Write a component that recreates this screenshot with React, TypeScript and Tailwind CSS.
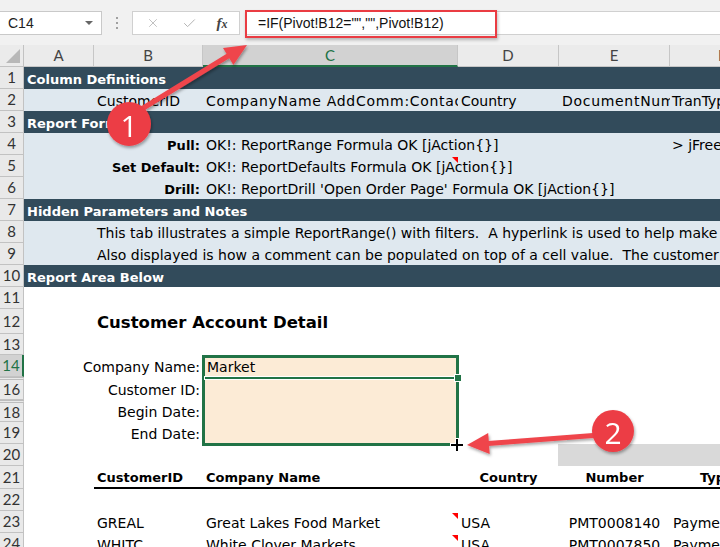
import React from "react";
import { X, Check } from "lucide-react";

type RowProps = {
  n: string;
  h?: string;
  bg?: string;
  active?: boolean;
  dbl?: boolean;
  children?: React.ReactNode;
};

function Row({ n, h = "h-[22px]", bg = "bg-white", active = false, dbl = false, children }: RowProps) {
  const hdr = active
    ? "bg-[#d2d2d2] text-[#217346] border-r-2 border-r-[#217346]"
    : "bg-[#e9e9e9] text-[#333] border-r border-r-[#c2c2c2]";
  return (
    <div className={`flex ${h}`}>
      <div
        className={`w-[24px] shrink-0 flex items-center justify-center border-b border-b-[#c2c2c2] font-['Lato',sans-serif] text-[15px] ${hdr} ${
          dbl ? "border-t-[3px] border-t-[#bdbdbd] border-double" : ""
        }`}
      >
        {n}
      </div>
      <div className={`flex-1 flex relative ${bg}`}>{children}</div>
    </div>
  );
}

const cA = "w-[70px] shrink-0 flex items-center whitespace-nowrap pt-[3px]";
const cB = "w-[109px] shrink-0 flex items-center whitespace-nowrap pt-[3px]";
const cC = "w-[255px] shrink-0 flex items-center whitespace-nowrap relative pt-[3px]";
const cD = "w-[101px] shrink-0 flex items-center whitespace-nowrap relative pt-[3px]";
const cE = "w-[111px] shrink-0 flex items-center whitespace-nowrap pt-[3px]";
const cF = "flex-1 flex items-center whitespace-nowrap pt-[3px]";

const darkTxt = "text-white font-bold text-[13px] pl-[3px]";

function Tri() {
  return (
    <div className="absolute right-0 top-[2px] w-0 h-0 border-l-[6px] border-l-transparent border-t-[6px] border-t-[#ff0000]" />
  );
}

export default function App() {
  return (
    <div className="relative w-[720px] h-[547px] overflow-hidden bg-white font-['DejaVu_Sans',sans-serif] text-[14px] text-black">
      {/* Formula bar */}
      <div className="h-[45px] bg-[#f1f1f1] flex items-start pt-[11px]">
        <div className="w-[102px] h-[24px] bg-white border border-[#c9c9c9] border-l-0 flex items-center pl-[8px] font-['Liberation_Sans',sans-serif] text-[14px] text-[#222]">
          C14
          <div className="ml-auto mr-[8px] w-0 h-0 border-l-[4px] border-l-transparent border-r-[4px] border-r-transparent border-t-[4px] border-t-[#666]" />
        </div>
        <div className="w-[30px] h-[24px] flex flex-col items-center justify-center gap-[3px]">
          <div className="w-[2px] h-[2px] bg-[#a0a0a0]" />
          <div className="w-[2px] h-[2px] bg-[#a0a0a0]" />
          <div className="w-[2px] h-[2px] bg-[#a0a0a0]" />
        </div>
        <div className="w-[108px] h-[24px] bg-white border border-[#d0d0d0] flex items-center">
          <div className="w-[40px] flex justify-center">
            <X size={14} strokeWidth={1.4} color="#b3b3b3" />
          </div>
          <div className="w-[32px] flex justify-center">
            <Check size={15} strokeWidth={1.6} color="#b3b3b3" />
          </div>
          <div className="w-[34px] flex justify-center">
            <span className="font-['Liberation_Serif',serif] italic font-bold text-[15px] text-[#444] leading-none">
              f<span className="text-[12px]">x</span>
            </span>
          </div>
        </div>
        <div className="ml-[5px] flex-1 h-[24px] bg-white border-y border-l border-[#d0d0d0] flex items-center pl-[12px] font-['Liberation_Sans',sans-serif] text-[14px] text-[#111]">
          =IF(Pivot!B12="","",Pivot!B12)
        </div>
      </div>

      {/* Column headers */}
      <div className="flex h-[22px] bg-[#ebebeb] font-['Lato',sans-serif] text-[15px] text-[#444]">
        <div className="w-[24px] shrink-0 border-r border-b border-[#c2c2c2] flex items-end justify-end pr-[3px] pb-[3px]">
          <div className="w-0 h-0 border-l-[14px] border-l-transparent border-b-[14px] border-b-[#b8b8b8]" />
        </div>
        <div className="w-[70px] shrink-0 border-r border-b border-[#c6c6c6] flex items-center justify-center">A</div>
        <div className="w-[109px] shrink-0 border-r border-b border-[#c6c6c6] flex items-center justify-center">B</div>
        <div className="w-[255px] shrink-0 bg-[#d2d2d2] border-r border-r-[#c6c6c6] border-b-2 border-b-[#217346] flex items-center justify-center text-[#217346]">C</div>
        <div className="w-[101px] shrink-0 border-r border-b border-[#c6c6c6] flex items-center justify-center">D</div>
        <div className="w-[111px] shrink-0 border-r border-b border-[#c6c6c6] flex items-center justify-center">E</div>
        <div className="flex-1 border-b border-[#c6c6c6] flex items-center pl-[48px]">F</div>
      </div>

      {/* Sheet rows */}
      <Row n="1" bg="bg-[#324b5b]">
        <div className={`${cA} ${darkTxt}`}>Column Definitions</div>
      </Row>
      <Row n="2" bg="bg-[#dfe8ef]">
        <div className={cA} />
        <div className={`${cB} pl-[3px]`}>CustomerID</div>
        <div className={`${cC} pl-[3px] overflow-hidden tracking-[0.7px]`}>CompanyName AddComm:Contact</div>
        <div className={`${cD} pl-[3px]`}>Country</div>
        <div className={`${cE} pl-[3px] overflow-hidden tracking-[0.7px]`}>DocumentNumber</div>
        <div className={`${cF} pl-[2px]`}>TranType</div>
      </Row>
      <Row n="3" bg="bg-[#324b5b]">
        <div className={`${cA} ${darkTxt}`}>Report Formulas</div>
      </Row>
      <Row n="4" bg="bg-[#dfe8ef]">
        <div className={cA} />
        <div className={`${cB} justify-end pr-[3px] font-bold text-[13px]`}>Pull:</div>
        <div className={`${cC} pl-[3px]`}>OK!: ReportRange Formula OK [jAction{"{}"}]</div>
        <div className={cD} />
        <div className={cE} />
        <div className={`${cF} pl-[2px]`}>&gt; jFreeze</div>
      </Row>
      <Row n="5" bg="bg-[#dfe8ef]">
        <div className={cA} />
        <div className={`${cB} justify-end pr-[3px] font-bold text-[13px]`}>Set Default:</div>
        <div className={`${cC} pl-[3px]`}>
          OK!: ReportDefaults Formula OK [jAction{"{}"}]
          <Tri />
        </div>
      </Row>
      <Row n="6" bg="bg-[#dfe8ef]">
        <div className={cA} />
        <div className={`${cB} justify-end pr-[3px] font-bold text-[13px]`}>Drill:</div>
        <div className={`${cC} pl-[3px]`}>OK!: ReportDrill 'Open Order Page' Formula OK [jAction{"{}"}]</div>
      </Row>
      <Row n="7" bg="bg-[#324b5b]">
        <div className={`${cA} ${darkTxt}`}>Hidden Parameters and Notes</div>
      </Row>
      <Row n="8" bg="bg-[#dfe8ef]">
        <div className={cA} />
        <div className={`${cB} pl-[3px] whitespace-pre`}>
          This tab illustrates a simple ReportRange() with filters.  A hyperlink is used to help make this report interactive.
        </div>
      </Row>
      <Row n="9" bg="bg-[#dfe8ef]">
        <div className={cA} />
        <div className={`${cB} pl-[3px] whitespace-pre`}>
          Also displayed is how a comment can be populated on top of a cell value.  The customer name is shown.
        </div>
      </Row>
      <Row n="10" bg="bg-[#324b5b]">
        <div className={`${cA} ${darkTxt}`}>Report Area Below</div>
      </Row>
      <Row n="11" />
      <Row n="12" h="h-[25px]">
        <div className={cA} />
        <div className={`${cB} pl-[3px] font-bold text-[16.5px]`}>Customer Account Detail</div>
      </Row>
      <Row n="13" h="h-[21px]" />
      <Row n="14" active>
        <div className={cA} />
        <div className={`${cB} justify-end pr-[3px]`}>Company Name:</div>
        <div className={`${cC} bg-[#fcebd6] pl-[4px]`}>Market</div>
      </Row>
      <Row n="16" h="h-[23px]" dbl>
        <div className={cA} />
        <div className={`${cB} justify-end pr-[3px]`}>Customer ID:</div>
        <div className={`${cC} bg-[#fcebd6]`} />
      </Row>
      <Row n="18" dbl>
        <div className={cA} />
        <div className={`${cB} justify-end pr-[3px]`}>Begin Date:</div>
        <div className={`${cC} bg-[#fcebd6]`} />
      </Row>
      <Row n="19">
        <div className={cA} />
        <div className={`${cB} justify-end pr-[3px]`}>End Date:</div>
        <div className={`${cC} bg-[#fcebd6]`} />
      </Row>
      <Row n="20">
        <div className={cA} />
        <div className={cB} />
        <div className={cC} />
        <div className="w-[100px] shrink-0" />
        <div className="flex-1 bg-[#d9d9d9]" />
      </Row>
      <Row n="21" h="h-[23px]">
        <div className={cA} />
        <div className="flex-1 flex border-b-2 border-black font-bold text-[13px]">
          <div className={`${cB} pl-[3px]`}>CustomerID</div>
          <div className={`${cC} pl-[3px]`}>Company Name</div>
          <div className={`${cD} justify-center`}>Country</div>
          <div className={`${cE} justify-center`}>Number</div>
          <div className={`${cF} pl-[30px]`}>Type</div>
        </div>
      </Row>
      <Row n="22" />
      <Row n="23">
        <div className={cA} />
        <div className={`${cB} pl-[3px]`}>GREAL</div>
        <div className={`${cC} pl-[3px]`}>
          Great Lakes Food Market
          <Tri />
        </div>
        <div className={`${cD} pl-[3px]`}>USA</div>
        <div className={`${cE} justify-center`}>PMT0008140</div>
        <div className={`${cF} pl-[3px]`}>Payment</div>
      </Row>
      <Row n="24">
        <div className={cA} />
        <div className={`${cB} pl-[3px]`}>WHITC</div>
        <div className={`${cC} pl-[3px]`}>
          White Clover Markets
          <Tri />
        </div>
        <div className={`${cD} pl-[3px]`}>USA</div>
        <div className={`${cE} justify-center`}>PMT0007850</div>
        <div className={`${cF} pl-[3px]`}>Payment</div>
      </Row>

      {/* Selection overlay */}
      <div className="absolute left-[202px] top-[355px] w-[257px] h-[91px] border-[3px] border-[#217346] pointer-events-none" />
      <div className="absolute left-[205px] top-[377px] w-[251px] h-[2px] bg-[#217346] shadow-[0_0_0_1px_#ffffff]" />
      <div className="absolute left-[455px] top-[375px] w-[6px] h-[6px] bg-[#217346] shadow-[0_0_0_1px_#ffffff]" />
      {/* + cursor */}
      <div className="absolute left-[450px] top-[443px] w-[14px] h-[4px] bg-white" />
      <div className="absolute left-[455px] top-[438px] w-[4px] h-[14px] bg-white" />
      <div className="absolute left-[451px] top-[444px] w-[12px] h-[2px] bg-black" />
      <div className="absolute left-[456px] top-[439px] w-[2px] h-[12px] bg-black" />

      {/* Formula highlight box */}
      <div className="absolute left-[245px] top-[10px] w-[252px] h-[28px] border-2 border-[#ea3c43] shadow-[1px_2px_3px_rgba(0,0,0,0.25)]" />

      {/* Callout arrows */}
      <svg className="absolute left-0 top-0 pointer-events-none" width="720" height="547" viewBox="0 0 720 547">
        <defs>
          <filter id="sh" x="-30%" y="-30%" width="160%" height="160%">
            <feDropShadow dx="1" dy="2" stdDeviation="1.6" floodColor="#000" floodOpacity="0.35" />
          </filter>
        </defs>
        <g filter="url(#sh)">
          <line x1="140" y1="110" x2="228" y2="56" stroke="#ef454c" strokeWidth="5" strokeLinecap="round" />
          <polygon points="247,45 233.4,65 223,47.9" fill="#ef454c" />
          <circle cx="129" cy="124" r="22" fill="#ec3d45" />
          <text x="129" y="125" textAnchor="middle" dominantBaseline="central" fill="#ffffff" fontSize="30" fontFamily="Open Sans, sans-serif">1</text>
        </g>
        <g filter="url(#sh)">
          <line x1="600" y1="435" x2="488" y2="443.5" stroke="#ef454c" strokeWidth="5" strokeLinecap="round" />
          <polygon points="467,445 489.7,454 488.2,433" fill="#ef454c" />
          <circle cx="613" cy="431" r="21" fill="#ec3d45" />
          <text x="613" y="432" textAnchor="middle" dominantBaseline="central" fill="#ffffff" fontSize="30" fontFamily="Open Sans, sans-serif">2</text>
        </g>
      </svg>
    </div>
  );
}
